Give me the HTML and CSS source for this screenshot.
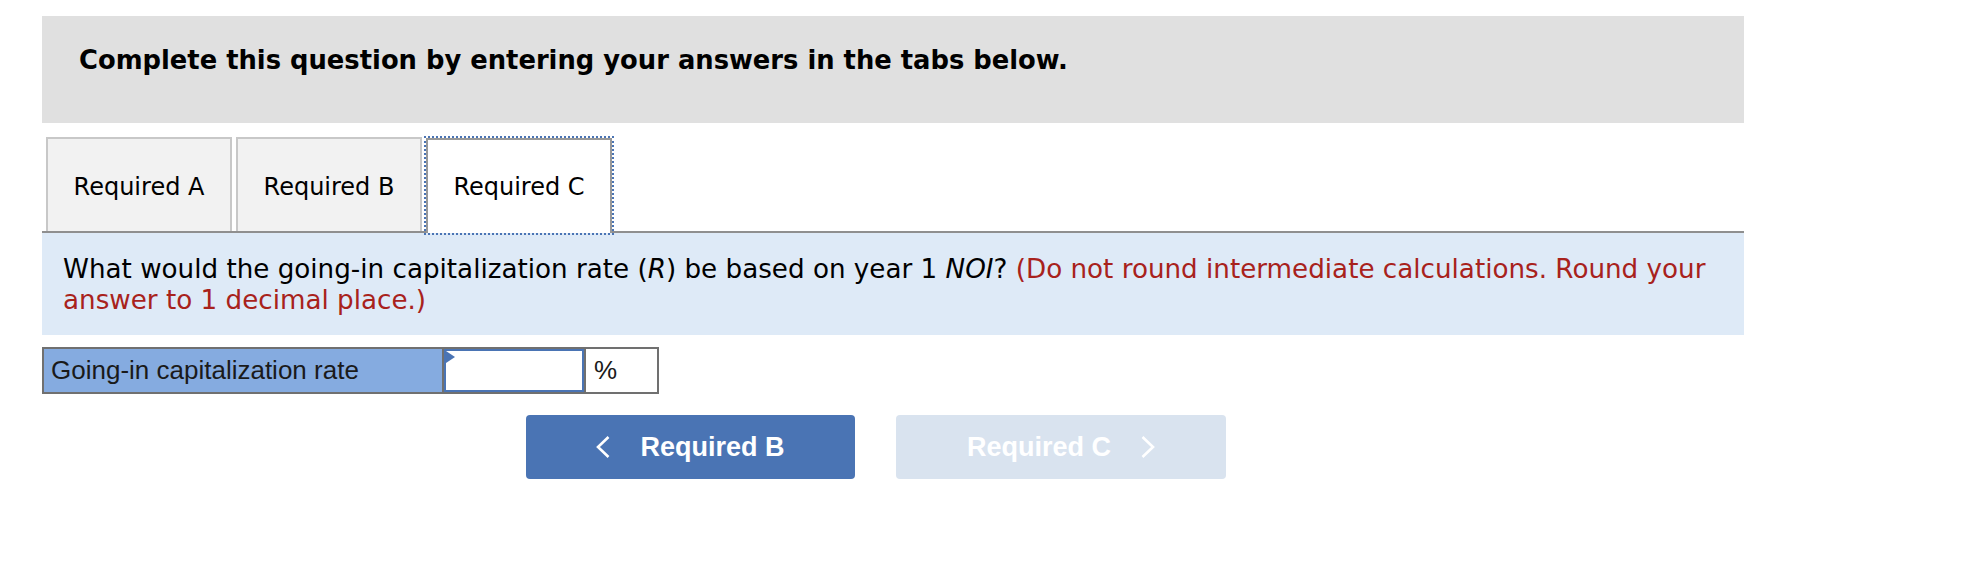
FILE: index.html
```html
<!DOCTYPE html>
<html>
<head>
<meta charset="utf-8">
<link rel="stylesheet" href="styles.css">
</head>
<body>
<div class="page">
  <div class="header">Complete this question by entering your answers in the tabs below.</div>
  <div class="tabs">
    <div class="tab">Required A</div>
    <div class="tab">Required B</div>
    <div class="tab active">Required C</div>
  </div>
  <div class="question">What would the going-in capitalization rate (<i>R</i>) be based on year 1 <i>NOI</i>? <span class="red">(Do not round intermediate calculations. Round your answer to 1 decimal place.)</span></div>
  <div class="answer">
    <div class="label">Going-in capitalization rate</div>
    <div class="inputcell"><span class="flag"></span></div>
    <div class="unit">%</div>
  </div>
  <div class="nav">
    <div class="btn prev">
      <svg class="chev" width="14" height="22" viewBox="0 0 14 22"><polyline points="12.5,1 2,11 12.5,21" fill="none" stroke="#fff" stroke-width="2.6"/></svg>
      <span>Required B</span>
    </div>
    <div class="btn next">
      <span>Required C</span>
      <svg class="chev" width="14" height="22" viewBox="0 0 14 22"><polyline points="1.5,1 12,11 1.5,21" fill="none" stroke="#fff" stroke-width="2.6"/></svg>
    </div>
  </div>
</div>
</body>
</html>
```
FILE: styles.css
```css
html, body {
  margin: 0;
  padding: 0;
  background: #fff;
}
.page {
  margin-left: 42px;
  width: 1702px;
  padding-top: 16px;
  font-family: "DejaVu Sans", Verdana, sans-serif;
  color: #000;
}
.header {
  background: #e0e0e0;
  font-weight: bold;
  font-size: 25.8px;
  line-height: 30px;
  padding: 29px 0 48px 37px;
}
.tabs {
  display: flex;
  gap: 4px;
  margin-top: 14px;
  padding-left: 4px;
  border-bottom: 2px solid #8f8f8f;
}
.tab {
  box-sizing: border-box;
  width: 186px;
  height: 94px;
  border: 2px solid #c8c8c8;
  border-bottom: none;
  background: #f2f2f2;
  text-align: center;
  font-size: 24px;
  line-height: 28px;
  padding-top: 34px;
}
.tab.active {
  background: #fff;
  border-color: #999;
  height: 95px;
  margin-top: 1px;
  margin-bottom: -2px;
  padding-top: 33px;
  outline: 2px dotted #4a74b4;
  outline-offset: 0;
}
.question {
  background: #deeaf7;
  font-size: 26.2px;
  line-height: 31px;
  padding: 21px 8px 19px 21px;
}
.red {
  color: #a8221c;
}
.answer {
  display: flex;
  width: fit-content;
  margin-top: 12px;
  border: 2px solid #707070;
  height: 43px;
  font-family: "Liberation Sans", Arial, sans-serif;
  font-size: 26px;
}
.label {
  width: 400px;
  background: #85abe0;
  border-right: 2px solid #707070;
  padding-left: 7px;
  box-sizing: border-box;
  line-height: 43px;
  color: #1a1a1a;
}
.inputcell {
  box-sizing: border-box;
  width: 140px;
  border: 2px solid #4a74b4;
  background: #fff;
  position: relative;
}
.flag {
  position: absolute;
  left: 0;
  top: 0;
  width: 0;
  height: 0;
  border-top: 6px solid transparent;
  border-bottom: 6px solid transparent;
  border-left: 9px solid #4a74b4;
}
.unit {
  box-sizing: border-box;
  width: 73px;
  border-left: 2px solid #707070;
  padding-left: 8px;
  line-height: 43px;
  color: #1a1a1a;
}
.nav {
  display: flex;
  gap: 41px;
  margin-top: 21px;
  margin-left: 484px;
}
.btn {
  box-sizing: border-box;
  width: 330px;
  height: 64px;
  border-radius: 4px;
  display: flex;
  align-items: center;
  justify-content: center;
  gap: 30px;
  color: #fff;
  font-family: "Liberation Sans", Arial, sans-serif;
  font-weight: bold;
  font-size: 27px;
}
.btn.prev {
  background: #4a74b4;
  width: 329px;
}
.btn.next {
  background: #d9e3ef;
}
.chev {
  display: block;
}
```
